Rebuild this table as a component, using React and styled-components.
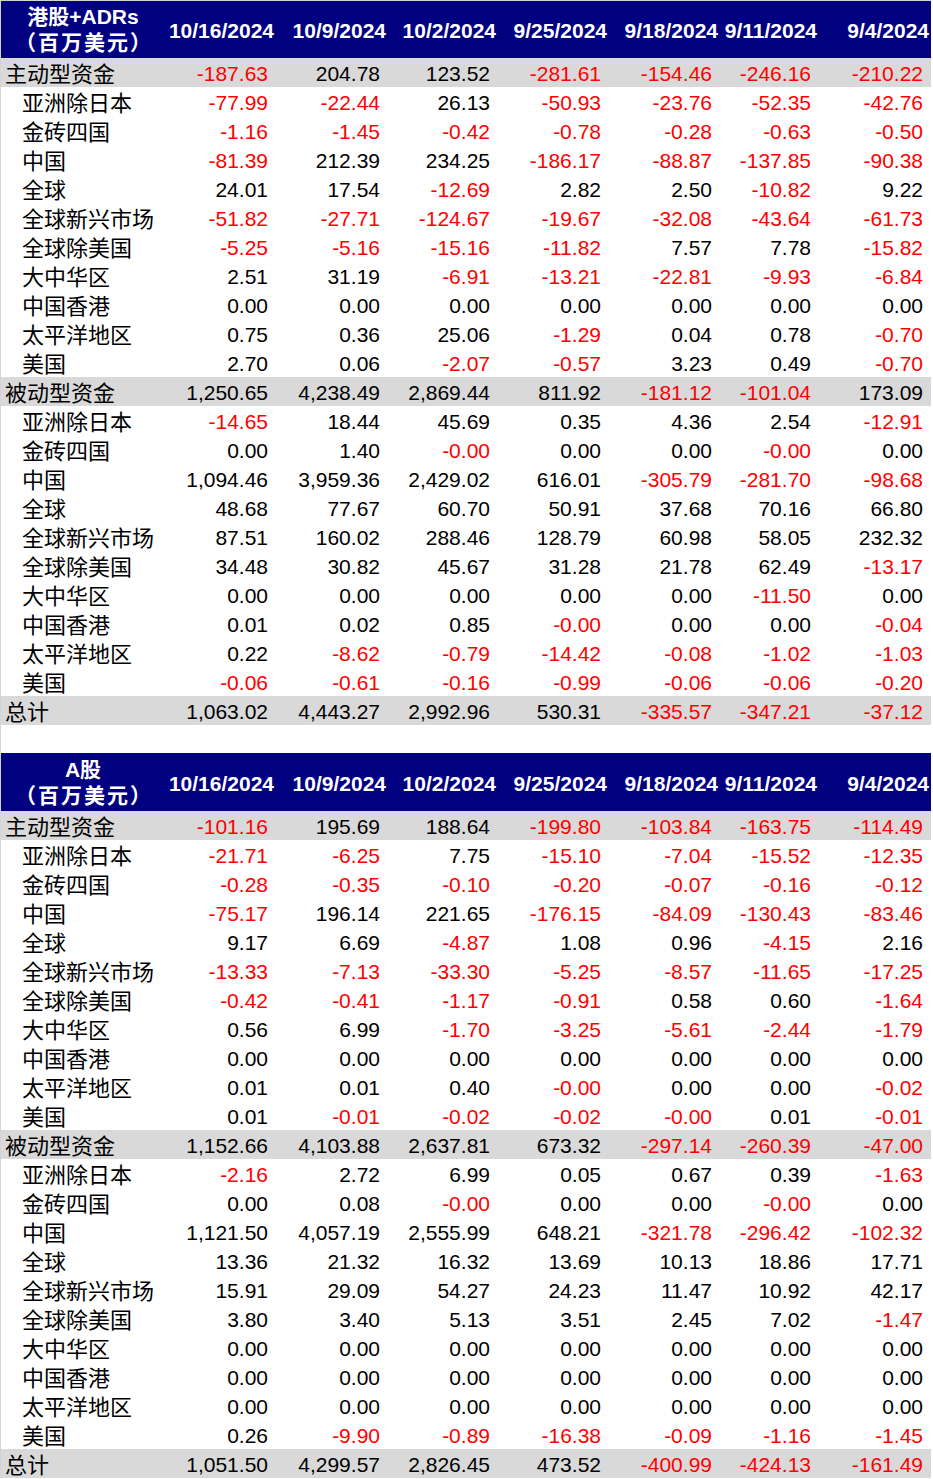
import React from "react";
import styled, { createGlobalStyle } from "styled-components";

const GlobalStyle = createGlobalStyle`
  html, body { margin: 0; padding: 0; background: #ffffff; }
  body { font-family: "Liberation Sans", Arial, "Noto Sans CJK SC", sans-serif; }
`;

const COLS = "164px 111px 112px 110px 111px 111px 99px 112px";
const DATES = ["10/16/2024", "10/9/2024", "10/2/2024", "9/25/2024", "9/18/2024", "9/11/2024", "9/4/2024"];

const Page = styled.div`
  width: 930px;
  border-left: 1px solid #d4d4d4;
  border-top: 1px solid #d4d4d4;
  display: flex;
  flex-direction: column;
  gap: 28px;
`;

const Table = styled.div`
  display: flex;
  flex-direction: column;
`;

const HeaderRow = styled.div`
  display: grid;
  grid-template-columns: ${COLS};
  height: ${(p) => (p.$first ? 57 : 58)}px;
  background: #000080;
  color: #ffffff;
  font-weight: bold;
  font-size: 21px;
`;

const TitleCell = styled.div`
  display: flex;
  flex-direction: column;
  align-items: center;
  justify-content: center;
  line-height: 26px;
  font-family: "Liberation Sans", Arial, "Noto Sans CJK SC", sans-serif;
  padding-top: 1px;
`;

const Unit = styled.span`
  letter-spacing: 2px;
  padding-left: 2px;
`;

const DateCell = styled.div`
  display: flex;
  align-items: center;
  justify-content: flex-end;
  padding-right: 2px;
  padding-top: 3px;
  white-space: nowrap;
`;

const Row = styled.div`
  display: grid;
  grid-template-columns: ${COLS};
  height: 29px;
  line-height: 29px;
  font-size: 21px;
  background: ${(p) => (p.$shaded ? "#d9d9d9" : "#ffffff")};
`;

const Label = styled.div`
  font-family: "Noto Sans CJK SC", "Liberation Sans", sans-serif;
  font-size: 22px;
  color: #000000;
  padding-left: ${(p) => (p.$indent ? 21 : 4)}px;
  white-space: nowrap;
`;

const Num = styled.div`
  text-align: right;
  padding-right: 8px;
  padding-top: 2px;
  line-height: 27px;
  color: ${(p) => (p.$neg ? "#ff0000" : "#000000")};
  white-space: nowrap;
`;

const z = ["0.00", "0.00", "0.00", "0.00", "0.00", "0.00", "0.00"];

const hk = [
  ["主动型资金", "s", ["-187.63", "204.78", "123.52", "-281.61", "-154.46", "-246.16", "-210.22"]],
  ["亚洲除日本", "i", ["-77.99", "-22.44", "26.13", "-50.93", "-23.76", "-52.35", "-42.76"]],
  ["金砖四国", "i", ["-1.16", "-1.45", "-0.42", "-0.78", "-0.28", "-0.63", "-0.50"]],
  ["中国", "i", ["-81.39", "212.39", "234.25", "-186.17", "-88.87", "-137.85", "-90.38"]],
  ["全球", "i", ["24.01", "17.54", "-12.69", "2.82", "2.50", "-10.82", "9.22"]],
  ["全球新兴市场", "i", ["-51.82", "-27.71", "-124.67", "-19.67", "-32.08", "-43.64", "-61.73"]],
  ["全球除美国", "i", ["-5.25", "-5.16", "-15.16", "-11.82", "7.57", "7.78", "-15.82"]],
  ["大中华区", "i", ["2.51", "31.19", "-6.91", "-13.21", "-22.81", "-9.93", "-6.84"]],
  ["中国香港", "i", z],
  ["太平洋地区", "i", ["0.75", "0.36", "25.06", "-1.29", "0.04", "0.78", "-0.70"]],
  ["美国", "i", ["2.70", "0.06", "-2.07", "-0.57", "3.23", "0.49", "-0.70"]],
  ["被动型资金", "s", ["1,250.65", "4,238.49", "2,869.44", "811.92", "-181.12", "-101.04", "173.09"]],
  ["亚洲除日本", "i", ["-14.65", "18.44", "45.69", "0.35", "4.36", "2.54", "-12.91"]],
  ["金砖四国", "i", ["0.00", "1.40", "-0.00", "0.00", "0.00", "-0.00", "0.00"]],
  ["中国", "i", ["1,094.46", "3,959.36", "2,429.02", "616.01", "-305.79", "-281.70", "-98.68"]],
  ["全球", "i", ["48.68", "77.67", "60.70", "50.91", "37.68", "70.16", "66.80"]],
  ["全球新兴市场", "i", ["87.51", "160.02", "288.46", "128.79", "60.98", "58.05", "232.32"]],
  ["全球除美国", "i", ["34.48", "30.82", "45.67", "31.28", "21.78", "62.49", "-13.17"]],
  ["大中华区", "i", ["0.00", "0.00", "0.00", "0.00", "0.00", "-11.50", "0.00"]],
  ["中国香港", "i", ["0.01", "0.02", "0.85", "-0.00", "0.00", "0.00", "-0.04"]],
  ["太平洋地区", "i", ["0.22", "-8.62", "-0.79", "-14.42", "-0.08", "-1.02", "-1.03"]],
  ["美国", "i", ["-0.06", "-0.61", "-0.16", "-0.99", "-0.06", "-0.06", "-0.20"]],
  ["总计", "s", ["1,063.02", "4,443.27", "2,992.96", "530.31", "-335.57", "-347.21", "-37.12"]],
];

const ash = [
  ["主动型资金", "s", ["-101.16", "195.69", "188.64", "-199.80", "-103.84", "-163.75", "-114.49"]],
  ["亚洲除日本", "i", ["-21.71", "-6.25", "7.75", "-15.10", "-7.04", "-15.52", "-12.35"]],
  ["金砖四国", "i", ["-0.28", "-0.35", "-0.10", "-0.20", "-0.07", "-0.16", "-0.12"]],
  ["中国", "i", ["-75.17", "196.14", "221.65", "-176.15", "-84.09", "-130.43", "-83.46"]],
  ["全球", "i", ["9.17", "6.69", "-4.87", "1.08", "0.96", "-4.15", "2.16"]],
  ["全球新兴市场", "i", ["-13.33", "-7.13", "-33.30", "-5.25", "-8.57", "-11.65", "-17.25"]],
  ["全球除美国", "i", ["-0.42", "-0.41", "-1.17", "-0.91", "0.58", "0.60", "-1.64"]],
  ["大中华区", "i", ["0.56", "6.99", "-1.70", "-3.25", "-5.61", "-2.44", "-1.79"]],
  ["中国香港", "i", z],
  ["太平洋地区", "i", ["0.01", "0.01", "0.40", "-0.00", "0.00", "0.00", "-0.02"]],
  ["美国", "i", ["0.01", "-0.01", "-0.02", "-0.02", "-0.00", "0.01", "-0.01"]],
  ["被动型资金", "s", ["1,152.66", "4,103.88", "2,637.81", "673.32", "-297.14", "-260.39", "-47.00"]],
  ["亚洲除日本", "i", ["-2.16", "2.72", "6.99", "0.05", "0.67", "0.39", "-1.63"]],
  ["金砖四国", "i", ["0.00", "0.08", "-0.00", "0.00", "0.00", "-0.00", "0.00"]],
  ["中国", "i", ["1,121.50", "4,057.19", "2,555.99", "648.21", "-321.78", "-296.42", "-102.32"]],
  ["全球", "i", ["13.36", "21.32", "16.32", "13.69", "10.13", "18.86", "17.71"]],
  ["全球新兴市场", "i", ["15.91", "29.09", "54.27", "24.23", "11.47", "10.92", "42.17"]],
  ["全球除美国", "i", ["3.80", "3.40", "5.13", "3.51", "2.45", "7.02", "-1.47"]],
  ["大中华区", "i", z],
  ["中国香港", "i", z],
  ["太平洋地区", "i", z],
  ["美国", "i", ["0.26", "-9.90", "-0.89", "-16.38", "-0.09", "-1.16", "-1.45"]],
  ["总计", "s", ["1,051.50", "4,299.57", "2,826.45", "473.52", "-400.99", "-424.13", "-161.49"]],
];

function FlowTable({ title, rows, first }) {
  return (
    <Table>
      <HeaderRow $first={first}>
        <TitleCell>
          <span>{title}</span>
          <Unit>（百万美元）</Unit>
        </TitleCell>
        {DATES.map((d) => (
          <DateCell key={d}>{d}</DateCell>
        ))}
      </HeaderRow>
      {rows.map(([label, kind, vals], i) => (
        <Row key={i} $shaded={kind === "s"}>
          <Label $indent={kind === "i"}>{label}</Label>
          {vals.map((v, j) => (
            <Num key={j} $neg={v.startsWith("-")}>{v}</Num>
          ))}
        </Row>
      ))}
    </Table>
  );
}

export default function App() {
  return (
    <>
      <GlobalStyle />
      <Page>
        <FlowTable title="港股+ADRs" rows={hk} first />
        <FlowTable title="A股" rows={ash} />
      </Page>
    </>
  );
}
